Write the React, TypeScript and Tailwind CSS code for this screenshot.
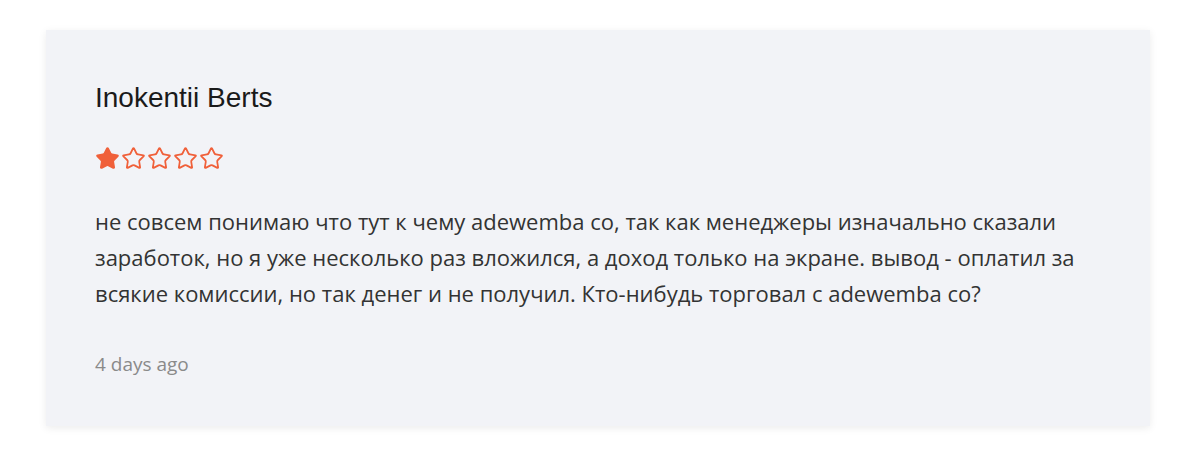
import { Star } from "lucide-react"

const rating = 1

export default function App() {
  return (
    <div className="min-h-[460px] bg-white px-[46px] pt-[30px]">
      <div className="w-[1104px] bg-[#f2f3f7] px-[49px] pt-[52px] pb-[49px] shadow-[0_2px_8px_rgba(0,0,0,0.08)]">
        <h3 className="font-['Liberation_Sans',Arial,sans-serif] text-[28px] leading-[32px] text-[#1a1a1a]">
          Inokentii Berts
        </h3>
        <div className="mt-[32px] flex gap-[1px]">
          {[1, 2, 3, 4, 5].map((i) => (
            <Star
              key={i}
              size={25}
              strokeWidth={1.7}
              className={i <= rating ? "fill-[#f0603a] text-[#f0603a]" : "text-[#f0603a]"}
            />
          ))}
        </div>
        <p className="mt-[32px] font-['Open_Sans',sans-serif] text-[22px] leading-[36px] text-[#333]">
          не совсем понимаю что тут к чему adewemba co, так как менеджеры изначально сказали заработок, но я уже
          несколько раз вложился, а доход только на экране. вывод - оплатил за всякие комиссии, но так денег и не
          получил. Кто-нибудь торговал с adewemba co?
        </p>
        <div className="mt-[40px] font-['Open_Sans',sans-serif] text-[19px] leading-[26px] text-[#8a8a8a]">
          4 days ago
        </div>
      </div>
    </div>
  )
}
